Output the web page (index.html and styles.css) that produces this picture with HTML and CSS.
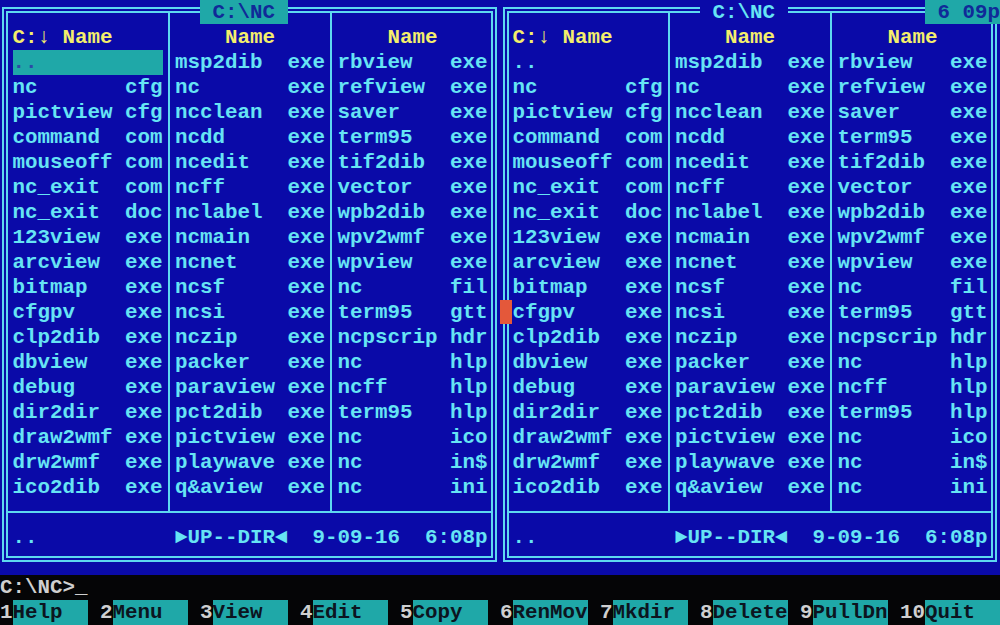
FILE: index.html
```html
<!DOCTYPE html>
<html>
<head>
<meta charset="utf-8">
<title>Norton Commander</title>
<link rel="stylesheet" href="styles.css">
</head>
<body>
<div class="screen">
  <div class="panels">
    <section class="panel left">
      <div class="title active"> C:\NC </div>
      <div class="cols">
        <div class="col">
          <div class="hd"><span class="drv">C:↓</span>Name</div>
          <div class="f cur"><span>..</span></div>
          <div class="f"><span>nc</span><span>cfg</span></div>
          <div class="f"><span>pictview</span><span>cfg</span></div>
          <div class="f"><span>command</span><span>com</span></div>
          <div class="f"><span>mouseoff</span><span>com</span></div>
          <div class="f"><span>nc_exit</span><span>com</span></div>
          <div class="f"><span>nc_exit</span><span>doc</span></div>
          <div class="f"><span>123view</span><span>exe</span></div>
          <div class="f"><span>arcview</span><span>exe</span></div>
          <div class="f"><span>bitmap</span><span>exe</span></div>
          <div class="f"><span>cfgpv</span><span>exe</span></div>
          <div class="f"><span>clp2dib</span><span>exe</span></div>
          <div class="f"><span>dbview</span><span>exe</span></div>
          <div class="f"><span>debug</span><span>exe</span></div>
          <div class="f"><span>dir2dir</span><span>exe</span></div>
          <div class="f"><span>draw2wmf</span><span>exe</span></div>
          <div class="f"><span>drw2wmf</span><span>exe</span></div>
          <div class="f"><span>ico2dib</span><span>exe</span></div>
        </div>
        <div class="col">
          <div class="hd">Name</div>
          <div class="f"><span>msp2dib</span><span>exe</span></div>
          <div class="f"><span>nc</span><span>exe</span></div>
          <div class="f"><span>ncclean</span><span>exe</span></div>
          <div class="f"><span>ncdd</span><span>exe</span></div>
          <div class="f"><span>ncedit</span><span>exe</span></div>
          <div class="f"><span>ncff</span><span>exe</span></div>
          <div class="f"><span>nclabel</span><span>exe</span></div>
          <div class="f"><span>ncmain</span><span>exe</span></div>
          <div class="f"><span>ncnet</span><span>exe</span></div>
          <div class="f"><span>ncsf</span><span>exe</span></div>
          <div class="f"><span>ncsi</span><span>exe</span></div>
          <div class="f"><span>nczip</span><span>exe</span></div>
          <div class="f"><span>packer</span><span>exe</span></div>
          <div class="f"><span>paraview</span><span>exe</span></div>
          <div class="f"><span>pct2dib</span><span>exe</span></div>
          <div class="f"><span>pictview</span><span>exe</span></div>
          <div class="f"><span>playwave</span><span>exe</span></div>
          <div class="f"><span>q&amp;aview</span><span>exe</span></div>
        </div>
        <div class="col">
          <div class="hd">Name</div>
          <div class="f"><span>rbview</span><span>exe</span></div>
          <div class="f"><span>refview</span><span>exe</span></div>
          <div class="f"><span>saver</span><span>exe</span></div>
          <div class="f"><span>term95</span><span>exe</span></div>
          <div class="f"><span>tif2dib</span><span>exe</span></div>
          <div class="f"><span>vector</span><span>exe</span></div>
          <div class="f"><span>wpb2dib</span><span>exe</span></div>
          <div class="f"><span>wpv2wmf</span><span>exe</span></div>
          <div class="f"><span>wpview</span><span>exe</span></div>
          <div class="f"><span>nc</span><span>fil</span></div>
          <div class="f"><span>term95</span><span>gtt</span></div>
          <div class="f"><span>ncpscrip</span><span>hdr</span></div>
          <div class="f"><span>nc</span><span>hlp</span></div>
          <div class="f"><span>ncff</span><span>hlp</span></div>
          <div class="f"><span>term95</span><span>hlp</span></div>
          <div class="f"><span>nc</span><span>ico</span></div>
          <div class="f"><span>nc</span><span>in$</span></div>
          <div class="f"><span>nc</span><span>ini</span></div>
        </div>
      </div>
      <div class="info">
        <span class="i1">..</span>
        <span class="i2"><i class="tri">►</i>UP--DIR<i class="tri">◄</i></span>
        <span class="i3">9-09-16</span>
        <span class="i4">6:08p</span>
      </div>
    </section>

    <section class="panel right">
      <div class="title"> C:\NC </div>
      <div class="cols">
        <div class="col">
          <div class="hd"><span class="drv">C:↓</span>Name</div>
          <div class="f"><span>..</span></div>
          <div class="f"><span>nc</span><span>cfg</span></div>
          <div class="f"><span>pictview</span><span>cfg</span></div>
          <div class="f"><span>command</span><span>com</span></div>
          <div class="f"><span>mouseoff</span><span>com</span></div>
          <div class="f"><span>nc_exit</span><span>com</span></div>
          <div class="f"><span>nc_exit</span><span>doc</span></div>
          <div class="f"><span>123view</span><span>exe</span></div>
          <div class="f"><span>arcview</span><span>exe</span></div>
          <div class="f"><span>bitmap</span><span>exe</span></div>
          <div class="f"><span>cfgpv</span><span>exe</span></div>
          <div class="f"><span>clp2dib</span><span>exe</span></div>
          <div class="f"><span>dbview</span><span>exe</span></div>
          <div class="f"><span>debug</span><span>exe</span></div>
          <div class="f"><span>dir2dir</span><span>exe</span></div>
          <div class="f"><span>draw2wmf</span><span>exe</span></div>
          <div class="f"><span>drw2wmf</span><span>exe</span></div>
          <div class="f"><span>ico2dib</span><span>exe</span></div>
        </div>
        <div class="col">
          <div class="hd">Name</div>
          <div class="f"><span>msp2dib</span><span>exe</span></div>
          <div class="f"><span>nc</span><span>exe</span></div>
          <div class="f"><span>ncclean</span><span>exe</span></div>
          <div class="f"><span>ncdd</span><span>exe</span></div>
          <div class="f"><span>ncedit</span><span>exe</span></div>
          <div class="f"><span>ncff</span><span>exe</span></div>
          <div class="f"><span>nclabel</span><span>exe</span></div>
          <div class="f"><span>ncmain</span><span>exe</span></div>
          <div class="f"><span>ncnet</span><span>exe</span></div>
          <div class="f"><span>ncsf</span><span>exe</span></div>
          <div class="f"><span>ncsi</span><span>exe</span></div>
          <div class="f"><span>nczip</span><span>exe</span></div>
          <div class="f"><span>packer</span><span>exe</span></div>
          <div class="f"><span>paraview</span><span>exe</span></div>
          <div class="f"><span>pct2dib</span><span>exe</span></div>
          <div class="f"><span>pictview</span><span>exe</span></div>
          <div class="f"><span>playwave</span><span>exe</span></div>
          <div class="f"><span>q&amp;aview</span><span>exe</span></div>
        </div>
        <div class="col">
          <div class="hd">Name</div>
          <div class="f"><span>rbview</span><span>exe</span></div>
          <div class="f"><span>refview</span><span>exe</span></div>
          <div class="f"><span>saver</span><span>exe</span></div>
          <div class="f"><span>term95</span><span>exe</span></div>
          <div class="f"><span>tif2dib</span><span>exe</span></div>
          <div class="f"><span>vector</span><span>exe</span></div>
          <div class="f"><span>wpb2dib</span><span>exe</span></div>
          <div class="f"><span>wpv2wmf</span><span>exe</span></div>
          <div class="f"><span>wpview</span><span>exe</span></div>
          <div class="f"><span>nc</span><span>fil</span></div>
          <div class="f"><span>term95</span><span>gtt</span></div>
          <div class="f"><span>ncpscrip</span><span>hdr</span></div>
          <div class="f"><span>nc</span><span>hlp</span></div>
          <div class="f"><span>ncff</span><span>hlp</span></div>
          <div class="f"><span>term95</span><span>hlp</span></div>
          <div class="f"><span>nc</span><span>ico</span></div>
          <div class="f"><span>nc</span><span>in$</span></div>
          <div class="f"><span>nc</span><span>ini</span></div>
        </div>
      </div>
      <div class="info">
        <span class="i1">..</span>
        <span class="i2"><i class="tri">►</i>UP--DIR<i class="tri">◄</i></span>
        <span class="i3">9-09-16</span>
        <span class="i4">6:08p</span>
      </div>
    </section>
  </div>

  <div class="clock"> 6 09p</div>
  <div class="mouse"></div>

  <div class="cmd">C:\NC&gt;_</div>

  <div class="keys">
    <div class="k"><span class="num">1</span><span class="lbl">Help</span></div>
    <div class="k"><span class="num">2</span><span class="lbl">Menu</span></div>
    <div class="k"><span class="num">3</span><span class="lbl">View</span></div>
    <div class="k"><span class="num">4</span><span class="lbl">Edit</span></div>
    <div class="k"><span class="num">5</span><span class="lbl">Copy</span></div>
    <div class="k"><span class="num">6</span><span class="lbl">RenMov</span></div>
    <div class="k"><span class="num">7</span><span class="lbl">Mkdir</span></div>
    <div class="k"><span class="num">8</span><span class="lbl">Delete</span></div>
    <div class="k"><span class="num">9</span><span class="lbl">PullDn</span></div>
    <div class="k last"><span class="num two">10</span><span class="lbl">Quit</span></div>
  </div>
</div>
</body>
</html>
```

FILE: styles.css
```css
html, body {
  margin: 0;
  padding: 0;
  background: #040404;
}

.screen {
  position: relative;
  width: 1000px;
  height: 625px;
  overflow: hidden;
  background: #050506;
  color: #c9c9c9;
  font-family: "Liberation Mono", "DejaVu Sans Mono", monospace;
  font-weight: bold;
  font-size: 20.83px;
  line-height: 25px;
}

.panels {
  display: flex;
  height: 575px;
  box-sizing: border-box;
  padding-top: 7px;
  background: #0a0aa8;
  color: #66e4f4;
}

.panel {
  position: relative;
  box-sizing: border-box;
  height: 555px;
  border: 6px double #5ed8f0;
  display: flex;
  flex-direction: column;
}

.left {
  margin-left: 2px;
  width: 495px;
  --pl: 4.5px;
}

.right {
  margin-left: 6px;
  width: 494px;
  --pl: 3.5px;
}

.title {
  position: absolute;
  top: -13px;
  left: 191px;
  width: 87.5px;
  height: 24px;
  white-space: pre;
  background: #0a0aa8;
  color: #66e4f4;
}

.left .title {
  left: 192px;
}

.title.active {
  background: #1fa8a8;
  color: #102a98;
}

.cols {
  display: flex;
  height: 498px;
  padding-left: var(--pl);
  border-bottom: 2px solid #5ed8f0;
}

.col {
  width: 150px;
  padding-top: 12px;
}

.col + .col {
  margin-left: 5.25px;
  padding-left: 5.25px;
  border-left: 2px solid #5ed8f0;
}

.hd {
  height: 25px;
  padding-left: 50px;
  color: #f4ee6c;
  white-space: pre;
}

.drv {
  display: inline-block;
  width: 50px;
  margin-left: -50px;
}

.f {
  display: flex;
  justify-content: space-between;
  height: 25px;
  white-space: pre;
}

.f.cur {
  background: #1fa8a8;
  color: #2c4aa6;
}

.info {
  display: flex;
  padding-top: 12px;
  padding-left: var(--pl);
  height: 25px;
  white-space: pre;
}

.i1 { width: 162.5px; }
.i2 { width: 137.5px; }
.i3 { width: 112.5px; }

.tri {
  display: inline-block;
  width: 12.5px;
  font-style: normal;
  text-align: center;
}

.clock {
  position: absolute;
  top: 0;
  left: 925px;
  width: 75px;
  height: 24px;
  white-space: pre;
  background: #1fa8a8;
  color: #102a98;
}

.mouse {
  position: absolute;
  top: 300px;
  left: 500px;
  width: 12px;
  height: 24px;
  background: #e4583a;
}

.cmd {
  height: 25px;
  white-space: pre;
  color: #cfcfcf;
}

.keys {
  display: flex;
  height: 25px;
}

.k {
  display: flex;
  margin-right: 12.5px;
}

.k.last {
  margin-right: 0;
}

.num {
  width: 12.5px;
  color: #cfcfcf;
}

.num.two {
  width: 25px;
}

.lbl {
  width: 75px;
  background: #1fa8a8;
  color: #0c1420;
  white-space: pre;
}
```
